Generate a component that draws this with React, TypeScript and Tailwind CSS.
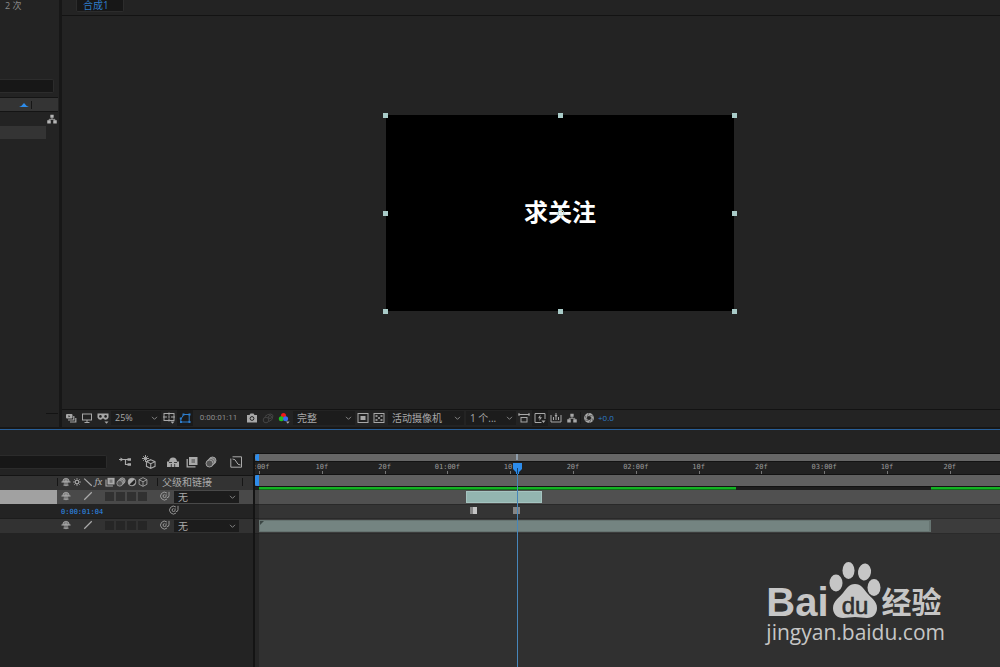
import React, { useState } from "react";

// number of frames that fit in the visible part of the timeline (30 fps)
const VISIBLE_FRAMES = 118;
const CURRENT_FRAME = 41;

const RULER = [
  { frame: 0, label: "0:00f" },
  { frame: 10, label: "10f" },
  { frame: 20, label: "20f" },
  { frame: 30, label: "01:00f" },
  { frame: 40, label: "10f" },
  { frame: 50, label: "20f" },
  { frame: 60, label: "02:00f" },
  { frame: 70, label: "10f" },
  { frame: 80, label: "20f" },
  { frame: 90, label: "03:00f" },
  { frame: 100, label: "10f" },
  { frame: 110, label: "20f" },
];

const HANDLES = [
  "-left-[3px] -top-[2px]",
  "left-1/2 -ml-[2px] -top-[2px]",
  "-right-[3px] -top-[2px]",
  "-left-[3px] top-1/2 -mt-[2px]",
  "-right-[3px] top-1/2 -mt-[2px]",
  "-left-[3px] -bottom-[3px]",
  "left-1/2 -ml-[2px] -bottom-[3px]",
  "-right-[3px] -bottom-[3px]",
];

const pct = (frames: number) => `${(frames / VISIBLE_FRAMES) * 100}%`;

type IconProps = { size?: string; children: React.ReactNode };

const Icon = ({ size = "size-3", children }: IconProps) => (
  <svg viewBox="0 0 12 12" className={`${size} shrink-0`} fill="none" stroke="currentColor" aria-hidden="true">
    {children}
  </svg>
);

const Network = ({ size }: { size?: string }) => (
  <Icon size={size}>
    <path d="M4 .8h4v3.800H4zM.3 7.500h4.200v3.800H.3zM7.500 7.500h4.200v3.800H7.500z" fill="currentColor" stroke="none" />
    <path d="M6 4v2.200M2.600 8V6.400h6.800V8" />
  </Icon>
);

const AlwaysPreview = () => (
  <Icon>
    <rect x="1" y="2" width="6.500" height="4.500" rx="1" fill="currentColor" stroke="none" />
    <path d="M3.500 3.200v2l1.800-1z" fill="#222" stroke="none" />
    <path d="M8.800 4v4H3M10.800 6v4H5" strokeWidth="1.200" />
  </Icon>
);

const Monitor = () => (
  <Icon>
    <rect x="1.500" y="2" width="9" height="6" />
    <path d="M3.500 10.500h5M6 8v2.500" />
  </Icon>
);

const Goggles = () => (
  <Icon>
    <path d="M.5 1.500h11v4q-1 2.500-3.500 2.200L6 6.200 4 7.700Q1.500 8 .5 5.500z" fill="currentColor" stroke="none" />
    <circle cx="3.400" cy="4.400" r="1.300" fill="#222" stroke="none" />
    <circle cx="8.600" cy="4.400" r="1.300" fill="#222" stroke="none" />
    <path d="M7.500 9.500h4l-2 2.300z" fill="currentColor" stroke="none" />
  </Icon>
);

const Guides = () => (
  <Icon>
    <rect x="1" y="1.500" width="10" height="7" />
    <path d="M6 .5v3.200M6 6.500v3M0 5h4M8 5h4M5 5h2" />
    <path d="M7.500 9.500h4l-2 2.300z" fill="currentColor" stroke="none" />
  </Icon>
);

const MaskPath = () => (
  <Icon>
    <path d="M1.800 10V6.500Q3.500 6 4.500 2.500h5.700V10z" />
    <path d="M1 9h2v2H1zM9.500 9h2v2h-2zM9.500 1.500h2v2h-2zM3.500 1.500h2v2h-2zM.8 5.500h2v2h-2z" fill="currentColor" stroke="none" />
  </Icon>
);

const Camera = () => (
  <Icon>
    <path d="M1 3h2.500l1-1.500h3L8.500 3H11v7.500H1z" fill="currentColor" stroke="none" />
    <circle cx="6" cy="6.500" r="1.900" stroke="#222" />
  </Icon>
);

const LastSnapshot = () => (
  <Icon>
    <circle cx="4" cy="8" r="2.800" />
    <path d="M3 4.500Q5 2 9 2l2 1.500-1 4-3 2" />
    <circle cx="8" cy="5" r="1.500" />
  </Icon>
);

const Channels = () => (
  <Icon>
    <g stroke="none">
      <circle cx="5.500" cy="3.500" r="2.500" fill="#f01818" />
      <circle cx="3.300" cy="6.800" r="2.500" fill="#20c020" />
      <circle cx="7.600" cy="6.800" r="2.500" fill="#3a6cf0" />
      <path d="M8 9.600h3.600l-1.800 2.200z" fill="currentColor" />
    </g>
  </Icon>
);

const Region = () => (
  <Icon>
    <rect x="1" y="1.500" width="10" height="9" />
    <rect x="3.500" y="4" width="5" height="4" fill="currentColor" stroke="none" />
  </Icon>
);

const Transparency = () => (
  <Icon>
    <rect x="1" y="1.500" width="10" height="9" />
    <path d="M2.500 3h2v2h-2zM7.500 3h2v2h-2zM5 5h2v2H5zM2.500 7h2v2h-2zM7.500 7h2v2h-2z" fill="currentColor" stroke="none" opacity=".8" />
  </Icon>
);

const PixelAspect = () => (
  <Icon>
    <path d="M.5 2.500h11M1 1v3M11 1v3" />
    <rect x="3" y="5.500" width="6" height="4.500" />
  </Icon>
);

const FastPreview = () => (
  <Icon>
    <path d="M7.500 10.500H1v-9h10V7" />
    <path d="M6.500 2.500 4 6.300h1.800L5.200 9 8 5.300H6.200z" fill="currentColor" stroke="none" />
    <path d="M7.500 8.500h4l-2 2.500z" fill="currentColor" stroke="none" />
  </Icon>
);

const TimelineIcon = () => (
  <Icon>
    <path d="M1 3v7h10V3M3.500 5v3M8.500 5v3M6 1v7" />
    <path d="M4.500 3h3L6 5z" fill="currentColor" stroke="none" />
  </Icon>
);

const Aperture = () => (
  <Icon>
    <circle cx="6" cy="6" r="3.500" strokeWidth="2.800" />
    <path d="M6 1 4 5M10.500 4 6.500 3.500M10 9 8.500 5.500M6 11l2-3.500M1.500 8l4 .5M2 3.500 3.500 7" stroke="#222" strokeWidth=".5" />
  </Icon>
);

const MiniFlow = () => (
  <Icon>
    <path d="M0 3.500h9M6.500 3.500v5h3" strokeWidth="1.200" />
    <path d="M1.500 1.500 4.500 3.500 1.500 5.500zM8.500 2.200h3.500v2.600H8.500zM8.500 7.200h3.500v2.600H8.500z" fill="currentColor" stroke="none" />
  </Icon>
);

const Draft3d = () => (
  <Icon size="size-[14px]">
    <path d="M3 0v6M0 3h6M1 1l4 4M5 1 1 5" strokeWidth=".8" />
    <path d="m7.500 4 3.700 1.700v4L7.500 11.500 3.800 9.700v-4zM3.800 5.700l3.700 1.800 3.700-1.800M7.500 7.500v4" strokeWidth=".9" />
  </Icon>
);

const Shy = () => (
  <Icon size="size-[10px]">
    <path d="M2 5.500Q2.500 1.500 6 1.500t4 4z" fill="currentColor" fillOpacity=".6" strokeWidth=".9" />
    <path d="M.5 6h11M6 3v8M3 9.800h6" strokeWidth="1.200" />
    <path d="M4 6v4M8 6v4" strokeWidth=".7" />
  </Icon>
);

const HideShy = () => (
  <Icon>
    <path d="M2 5.500Q2.500 1.500 6 1.500t4 4h2V11H0V5.500z" fill="currentColor" stroke="none" />
    <path d="M2 6.500h3M7 6.500h3M4.300 8v3M7.700 8v3" stroke="#222" strokeWidth=".8" />
  </Icon>
);

const FrameBlend = ({ size }: { size?: string }) => (
  <Icon size={size}>
    <path d="M3 1h8.500v8H3z" fill="currentColor" stroke="none" />
    <path d="M1.200 3v7.800h8.300" strokeWidth="1.300" />
    <path d="M5.500 3h3.500v4H5.500z" fill="#777" stroke="none" />
  </Icon>
);

const MotionBlur = ({ size }: { size?: string }) => (
  <Icon size={size}>
    <circle cx="7.500" cy="4.500" r="3.500" fill="#777" strokeWidth=".9" />
    <circle cx="6" cy="6" r="3.500" fill="#666" strokeWidth=".9" />
    <circle cx="4.500" cy="7.500" r="3.500" fill="#555" strokeWidth=".9" />
  </Icon>
);

const Graph = () => (
  <Icon>
    <path d="M2.500.8h9v10.400H.8V2.500M2.500 3q3 0 4 3t4 3" />
  </Icon>
);

const Sun = () => (
  <Icon size="size-[10px]">
    <circle cx="6" cy="6" r="2.200" strokeWidth="1.300" />
    <path d="M6 1.200v2M6 8.800v2M1.200 6h2M8.800 6h2M2.700 2.700l1.200 1.200M8.100 8.100l1.200 1.200M9.300 2.700 8.100 3.900M3.900 8.100 2.700 9.300" />
  </Icon>
);

const HalfCircle = () => (
  <Icon size="size-[10px]">
    <circle cx="6" cy="6" r="4.600" fill="currentColor" />
    <path d="M9 3a4.300 4.300 0 0 1-6 6z" fill="#222" stroke="none" />
  </Icon>
);

const Cube = () => (
  <Icon size="size-[10px]">
    <path d="m6 .8 4.700 2.400v5.600L6 11.200 1.300 8.800V3.200zM1.300 3.200 6 5.700l4.700-2.500M6 5.700v5.500" />
  </Icon>
);

const Slash = ({ back = false }) => (
  <Icon size="size-[10px]">
    <path d={back ? "m1.500 2 9 8.500" : "m1.500 10.500 9-9"} strokeWidth="1.400" />
  </Icon>
);

const PickWhip = () => (
  <Icon size="size-[10px]">
    <path d="M5.500 4.300a1.800 1.800 0 1 0 1.800 1.800V4M8.300 2.400a4.700 4.700 0 1 0 .2 7.200M10.800 1v4.500q0 2.600-2.600 2.600" />
  </Icon>
);

type DropdownProps = { label: string; options: string[]; className?: string; selectClass?: string };

const Dropdown = ({ label, options, className = "", selectClass = "pb-[2px]" }: DropdownProps) => (
  <div className={`relative shrink-0 bg-[#1c1c1c] ${className}`}>
    <select
      aria-label={label}
      className={`block h-full w-full appearance-none bg-transparent pl-1 pr-3 outline-none ${selectClass}`}
    >
      {options.map((o) => (
        <option key={o}>{o}</option>
      ))}
    </select>
    <svg viewBox="0 0 8 6" className="pointer-events-none absolute right-[3px] top-1/2 -mt-[2px] h-[5px] w-[7px]" fill="none" stroke="#999">
      <path d="m1 1 3 3 3-3" />
    </svg>
  </div>
);

type ToolProps = { label: string; className?: string; children: React.ReactNode };

const Tool = ({ label, className = "", children }: ToolProps) => (
  <button type="button" aria-label={label} className={`flex h-4 w-4 shrink-0 items-center justify-center ${className}`}>
    {children}
  </button>
);

const ProjectPanel = () => (
  <aside className="flex w-[59px] shrink-0 flex-col bg-[#232323]">
    <p className="h-3 pl-[5px] text-[9px] leading-3 text-[#8a8a8a]">2 次</p>
    <input
      aria-label="搜索项目"
      className="mr-[5px] mt-[67px] h-[14px] w-[54px] rounded-r-xs border border-l-0 border-[#2c2c2c] bg-[#171717] outline-none"
    />
    <div className="mr-px mt-1 flex h-[15px] items-center justify-end border-y border-[#141414] bg-[#343434]">
      <svg viewBox="0 0 10 4" className="mr-[2px] h-1 w-[10px]" fill="#2d8ceb">
        <path d="M0 4q3-1 5-4 2 3 5 4z" />
      </svg>
      <span className="mr-[26px] h-2 w-px bg-[#161616]" />
    </div>
    <div className="flex h-[14px] items-center justify-end pr-[2px] text-[#b5b5b5]">
      <Network size="size-[10px]" />
    </div>
    <div className="h-[13px] w-[46px] bg-[#343434]" />
    <div className="mb-[13px] mr-px mt-auto h-px w-3 self-end bg-[#131313]" />
  </aside>
);

const Viewer = () => (
  <main className="flex min-w-0 flex-1 flex-col bg-[#232323]">
    <div className="flex h-4 items-start border-b border-[#131313] pl-[14px]">
      <button type="button" className="flex h-3 w-12 items-start rounded-b-xs border border-t-0 border-[#2c2c2c] bg-[#171717] pl-[6px] text-[10px] leading-[10px] text-[#2f7cc8]">
        合成1
      </button>
    </div>
    <div className="flex flex-1 items-center justify-center pl-[58px]">
      <div className="relative flex h-[196px] w-[348px] items-center justify-center bg-black pb-[2px]">
        <h1 className="text-2xl font-bold text-white">求关注</h1>
        {HANDLES.map((pos) => (
          <span key={pos} className={`absolute size-[5px] bg-[#a9cbc8] ${pos}`} />
        ))}
        <svg viewBox="0 0 12 12" className="absolute left-1/2 top-1/2 -ml-[5px] -mt-[6px] size-3" fill="none" stroke="#a9cbc8">
          <circle cx="6" cy="6" r="3" />
          <path d="M6 1v10M1 6h10" strokeWidth=".5" />
        </svg>
      </div>
    </div>
    <div className="flex h-[18px] items-center border-t border-[#131313] pb-[2px] pl-px text-[#a8a8a8]">
      <Tool label="始终预览此视图"><AlwaysPreview /></Tool>
      <Tool label="主查看器"><Monitor /></Tool>
      <Tool label="Adobe 沉浸式环境"><Goggles /></Tool>
      <Dropdown label="放大率" options={["25%", "50%", "100%"]} className="h-[14px] w-[50px] text-[9px]" />
      <Tool label="网格和参考线"><Guides /></Tool>
      <Tool label="切换蒙版路径" className="bg-[#1a1a1a] text-[#2d7dcb]"><MaskPath /></Tool>
      <button type="button" className="w-[51px] shrink-0 text-center text-[8px] leading-3 text-[#8c8c8c] [font-family:Roboto,sans-serif]">0:00:01:11</button>
      <Tool label="拍摄快照"><Camera /></Tool>
      <Tool label="显示快照" className="text-[#444]"><LastSnapshot /></Tool>
      <Tool label="显示通道"><Channels /></Tool>
      <Dropdown label="分辨率" options={["完整", "二分之一", "三分之一"]} className="ml-px h-[14px] w-[62px] text-[10px]" />
      <Tool label="目标区域"><Region /></Tool>
      <Tool label="切换透明网格"><Transparency /></Tool>
      <Dropdown label="3D 视图" options={["活动摄像机", "正面", "顶部"]} className="ml-px h-[14px] w-[76px] text-[10px]" />
      <Dropdown label="视图布局" options={["1 个...", "2 个..."]} className="ml-[2px] h-[14px] w-[50px] text-[10px]" />
      <Tool label="像素长宽比校正"><PixelAspect /></Tool>
      <Tool label="快速预览" className="bg-[#1c1c1c]"><FastPreview /></Tool>
      <Tool label="时间轴"><TimelineIcon /></Tool>
      <Tool label="合成流程图"><Network size="size-[10px]" /></Tool>
      <span className="h-3 w-px bg-[#191919]" />
      <Tool label="重置曝光度"><Aperture /></Tool>
      <button type="button" className="ml-px text-[8px] font-medium leading-3 text-[#2d7dcb]">+0.0</button>
    </div>
  </main>
);

const Cell = ({ children = null }: { children?: React.ReactNode }) => (
  <span className="flex h-[10px] w-[11px] items-center justify-center">{children}</span>
);

const LayerRow = ({ selected = false }) => (
  <div className={`flex h-[14px] ${selected ? "bg-[#494949]" : "bg-[#323232]"}`}>
    <div className={`mr-[3px] h-full w-[57px] ${selected ? "bg-[#a1a1a1]" : ""}`} />
    <div className="flex items-start pt-px">
      <Cell><Shy /></Cell>
      <Cell />
      <Cell><Slash /></Cell>
      <Cell />
      {[0, 1, 2, 3].map((i) => (
        <Cell key={i}><i className={`size-[9px] ${selected ? "bg-[#313131]" : "bg-[#262626]"}`} /></Cell>
      ))}
      <span className="ml-3 mr-1"><PickWhip /></span>
      <Dropdown label="父级和链接" options={["无"]} className="h-3 w-[65px] text-[10px]" selectClass="leading-3" />
    </div>
  </div>
);

const LayerList = () => {
  const [search, setSearch] = useState("");

  return (
    <div className="flex w-[255px] shrink-0 flex-col border-r-2 border-[#141414] bg-[#232323] text-[#aaa]">
      <div className="flex h-[23px] items-center border-b border-[#141414] pb-1">
        <input
          aria-label="搜索图层"
          value={search}
          onChange={(e) => setSearch(e.target.value)}
          className="mr-[10px] h-[14px] w-[107px] rounded-r-xs border border-l-0 border-[#2b2b2b] bg-[#171717] text-[9px] outline-none"
        />
        <Tool label="合成微型流程图"><MiniFlow /></Tool>
        <Tool label="草图 3D" className="ml-2"><Draft3d /></Tool>
        <Tool label="隐藏消隐图层" className="ml-2"><HideShy /></Tool>
        <Tool label="帧混合" className="ml-[3px]"><FrameBlend /></Tool>
        <Tool label="运动模糊" className="ml-[3px]"><MotionBlur /></Tool>
        <Tool label="图表编辑器" className="ml-[9px]"><Graph /></Tool>
      </div>
      <div className="flex h-[14px] items-center bg-[#333] pb-[2px]">
        <span className="ml-[57px] mr-[2px] h-2 w-px bg-[#161616]" />
        <Cell><Shy /></Cell>
        <Cell><Sun /></Cell>
        <Cell><Slash back /></Cell>
        <Cell><em className="font-serif text-[10px] leading-3">fx</em></Cell>
        <Cell><FrameBlend size="size-[10px]" /></Cell>
        <Cell><MotionBlur size="size-[10px]" /></Cell>
        <Cell><HalfCircle /></Cell>
        <Cell><Cube /></Cell>
        <span className="ml-[9px] mr-1 h-2 w-px bg-[#161616]" />
        <span className="text-[10px] leading-3">父级和链接</span>
        <span className="ml-auto mr-[10px] h-2 w-px bg-[#161616]" />
      </div>
      <LayerRow selected />
      <div className="flex h-[15px] items-start border-b border-[#1c1c1c] pt-px">
        <span className="ml-[61px] w-[108px] text-[7px] leading-[14px] text-[#2d8ceb] [font-family:'DejaVu_Sans_Mono',monospace]">0:00:01:04</span>
        <PickWhip />
      </div>
      <LayerRow />
    </div>
  );
};

const Tracks = () => (
  <div className="relative flex min-w-0 flex-1 flex-col overflow-hidden bg-[#303030]">
    {/* navigator */}
    <div className="flex h-2 border-t border-[#131313] bg-[#666]">
      <span className="h-full w-1 rounded-l-sm bg-[#2d8ceb]" />
    </div>
    <div className="h-[14px] border-y border-[#131313] bg-[#222] pl-1">
      <div className="relative h-full text-[7px] leading-[10px] text-[#9a9a9a] [font-family:'DejaVu_Sans_Mono',monospace]">
        {RULER.map(({ frame, label }) => (
          <div key={frame} className="absolute inset-y-0 flex w-0 flex-col items-center" style={{ left: pct(frame) }}>
            <span>{label}</span>
            <i className="absolute bottom-0 left-0 h-[3px] w-px bg-[#777]" />
          </div>
        ))}
      </div>
    </div>
    {/* work area */}
    <div className="flex h-[11px] bg-[#606060]">
      <span className="h-full w-1 rounded-l-xs bg-[#2d8ceb]" />
    </div>
    {/* cached frames */}
    <div className="h-1 border-t border-[#131313] bg-[#1e1e1e] pl-1">
      <div className="flex h-[3px] justify-between">
        <span className="border-b border-[#0d7018] bg-[#12b422]" style={{ width: pct(76) }} />
        <span className="border-b border-[#0d7018] bg-[#12b422]" style={{ width: pct(VISIBLE_FRAMES - 107) }} />
      </div>
    </div>
    <div className="h-[14px] bg-[#505050] py-px pl-1">
      <div className="h-3 border border-[#a5c4c0] bg-[#93b5b0]" style={{ marginLeft: pct(33), width: pct(12) }} />
    </div>
    <div className="h-[15px] border-y border-[#292929] bg-[#343434] pl-1">
      <div className="relative h-full">
        <i className="absolute top-[2px] -ml-[3px] h-[7px] w-[7px] border-l-[3px] border-[#858585] bg-[#c4c4c4]" style={{ left: pct(34) }} />
        <i className="absolute top-[2px] -ml-[3px] h-[7px] w-[7px] bg-[#858585]" style={{ left: pct(CURRENT_FRAME) }} />
      </div>
    </div>
    <div className="h-[14px] bg-[#3c3c3c] py-px pl-1">
      <div className="h-3 border border-r-2 border-[#667471] bg-[#748481]" style={{ width: pct(107) }}>
        <svg viewBox="0 0 4 4" className="size-1" fill="#3b4644"><path d="M0 0h4L0 4z" /></svg>
      </div>
    </div>
    <div className="min-h-[134px] flex-1 border-t border-[#2a2a2a]" />
    <div className="pointer-events-none absolute bottom-0 left-0 top-[37px] w-1 bg-black/20" />
    {/* current time indicator */}
    <div className="pointer-events-none absolute inset-y-0 left-1 right-0">
      <div className="absolute inset-y-0 flex w-[2px] flex-col items-center" style={{ left: pct(CURRENT_FRAME) }}>
        <span className="mt-px h-[6px] w-[2px] bg-[#8d9cab]" />
        <svg viewBox="0 0 9 11" className="mt-[3px] h-[11px] w-[9px] shrink-0" fill="#2d8ceb">
          <path d="M0 0h9v6L6 9v2H3V9L0 6z" />
          <path d="M4.500 5v6" stroke="#12416f" />
        </svg>
        <span className="w-px flex-1 bg-[#4786ba]" />
      </div>
    </div>
  </div>
);

const Watermark = () => (
  <div className="absolute bottom-6 right-[55px] text-[#c6c6c6]">
    <div className="flex h-[59px] items-end">
      <span className="text-[40px] font-bold leading-[38px] [font-family:'Liberation_Sans',sans-serif]">Bai</span>
      <svg viewBox="0 0 52 57" className="mb-[2px] h-[57px] w-[52px]" fill="currentColor">
        <ellipse cx="7" cy="21" rx="6.500" ry="8.500" />
        <ellipse cx="19.500" cy="8.500" rx="6" ry="8.500" />
        <ellipse cx="35.500" cy="10" rx="6.500" ry="8.500" transform="rotate(8 35.500 10)" />
        <ellipse cx="45" cy="25.500" rx="6.500" ry="8.500" />
        <path d="M26 22c6 0 9 5 12 9 4 5 10 8 10 15 0 6-4 10-10 10-4 0-8-1-12-1s-8 1-12 1C8 56 4 52 4 46c0-7 6-10 10-15 3-4 6-9 12-9z" />
        <text x="26" y="52" fontSize="24" fontFamily="Liberation Sans, sans-serif" fill="#303030" stroke="#303030" strokeWidth=".6" textAnchor="middle">du</text>
      </svg>
      <span className="ml-px text-[30px] font-bold leading-[38px]">经验</span>
    </div>
    <a href="#" className="block text-[21px] font-medium leading-[22px]">jingyan.baidu.com</a>
  </div>
);

const App = () => (
  <div className="flex min-h-screen flex-col bg-[#171717] [font-family:'Open_Sans','Noto_Sans_CJK_SC',sans-serif]">
    <div className="flex flex-1 gap-[3px] pb-[2px]">
      <ProjectPanel />
      <Viewer />
    </div>
    <section className="relative border-t border-[#285f99] bg-[#232323] pt-[23px]">
      <div className="flex">
        <LayerList />
        <Tracks />
      </div>
      <Watermark />
    </section>
  </div>
);

export default App;
